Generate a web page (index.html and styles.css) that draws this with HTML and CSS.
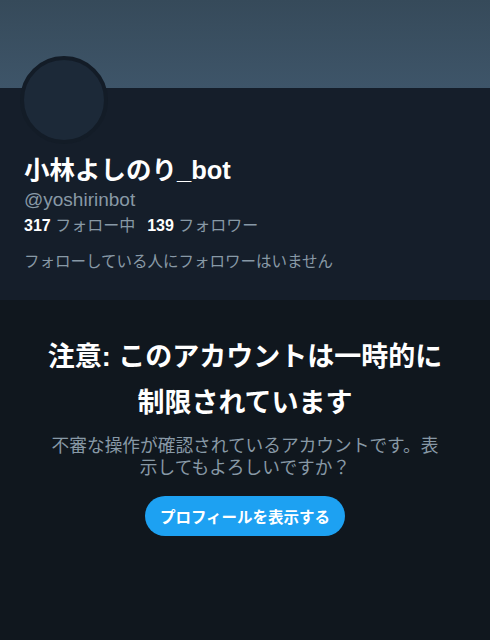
FILE: index.html
```html
<!DOCTYPE html>
<html lang="ja">
<head>
  <meta charset="UTF-8">
  <meta name="viewport" content="width=device-width, initial-scale=1.0">
  <title>小林よしのり_bot</title>
  <link rel="stylesheet" href="styles.css">
</head>
<body>
  <div class="banner"></div>

  <!-- Profile header -->
  <section class="profile">
    <div class="avatar"></div>
    <h1 class="name">小林よしのり_bot</h1>
    <p class="handle">@yoshirinbot</p>
    <p class="counts">
      <span><b>317</b> フォロー中</span>
      <span><b>139</b> フォロワー</span>
    </p>
    <p class="followed-by">フォローしている人にフォロワーはいません</p>
  </section>

  <!-- Warning -->
  <section class="warning">
    <h2>注意: このアカウントは一時的に制限されています</h2>
    <p>不審な操作が確認されているアカウントです。表示してもよろしいですか？</p>
    <button class="show-btn">プロフィールを表示する</button>
  </section>
</body>
</html>
```

FILE: styles.css
```css
body {
  margin: 0;
  background-color: #10171e;
  font-family: "Liberation Sans", "Noto Sans CJK JP", sans-serif;
  color: #ffffff;
}

.banner {
  height: 88px;
  background: linear-gradient(#364a5a, #3e5569);
}

.profile {
  display: flow-root;
  background-color: #151e2a;
  padding: 0 24px;
  height: 212px;
}

.avatar {
  width: 80px;
  height: 80px;
  margin: -32px 0 0 -4px;
  border-radius: 50%;
  border: 4px solid #131c27;
  background-color: #1c2938;
}

.name {
  font-size: 25.5px;
  font-weight: bold;
  margin: 10px 0 0 0;
  line-height: 32px;
}

.handle {
  margin: 3px 0 0 0;
  font-size: 19px;
  color: #8899a6;
  line-height: 22px;
}

.counts {
  margin: 5px 0 0 0;
  font-size: 16px;
  color: #8899a6;
  line-height: 20px;
  display: flex;
  gap: 12px;
}

.counts b {
  color: #ffffff;
}

.followed-by {
  margin: 16px 0 0 0;
  font-size: 15.5px;
  color: #8899a6;
  line-height: 20px;
}

.warning {
  padding: 34px 46px 0 46px;
  text-align: center;
}

.warning h2 {
  font-size: 27px;
  font-weight: bold;
  line-height: 46px;
  margin: 0;
}

.warning p {
  font-size: 17.7px;
  color: #8899a6;
  line-height: 22px;
  margin: 9px 0 0 0;
}

.show-btn {
  margin-top: 17px;
  height: 40px;
  padding: 0 15px;
  border: none;
  border-radius: 20px;
  background-color: #1da1f2;
  color: #ffffff;
  font-family: inherit;
  font-size: 15.5px;
  font-weight: bold;
  cursor: pointer;
}
```
